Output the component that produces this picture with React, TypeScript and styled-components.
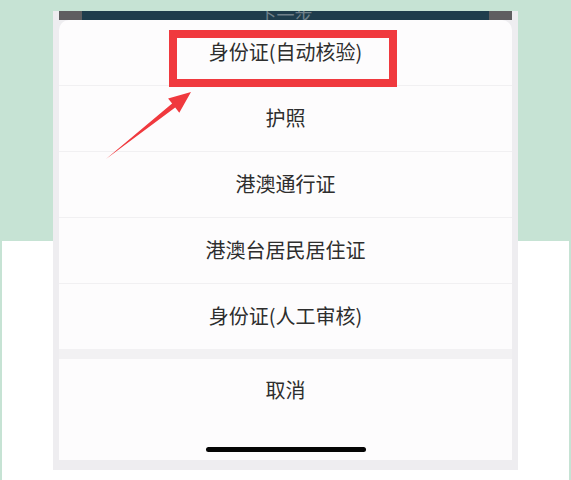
import * as React from "react";
import styled, { createGlobalStyle } from "styled-components";

const GlobalStyle = createGlobalStyle`
    html, body {
        margin: 0;
        padding: 0;
    }
    body {
        font-family: "Noto Sans CJK SC", "Noto Sans", sans-serif;
    }
`;

const MINT = "#c6e3d4";

const options = [
    "身份证(自动核验)",
    "护照",
    "港澳通行证",
    "港澳台居民居住证",
    "身份证(人工审核)",
];

const App: React.FC = () => {
    return (
        <Page>
            <GlobalStyle />
            <Phone>
                <Backdrop>
                    <NextButton>
                        <NextLabel>下一步</NextLabel>
                    </NextButton>
                </Backdrop>
                <Sheet>
                    <OptionList>
                        {options.map((label, i) => (
                            <Option key={label}>
                                {label}
                                {i === 0 && <Highlight />}
                            </Option>
                        ))}
                    </OptionList>
                    <Gap />
                    <Cancel>取消</Cancel>
                    <SafeArea>
                        <HomeBar />
                    </SafeArea>
                </Sheet>
            </Phone>
            <Arrow width="571" height="480" viewBox="0 0 571 480">
                <polygon
                    fill="#f0393e"
                    points="106,159 175.2,107.6 179.3,112.7 191,92 168.1,98.5 172.1,103.6"
                />
            </Arrow>
        </Page>
    );
};

const Page = styled.div`
    position: relative;
    height: 480px;
    overflow: hidden;
    box-sizing: border-box;
    border-left: 2px solid ${MINT};
    border-right: 2px solid ${MINT};
    background: linear-gradient(to bottom, ${MINT} 241px, #ffffff 241px);
    padding-top: 11px;
`;

const Phone = styled.div`
    margin-left: 51px;
    width: 465px;
    height: 459px;
    box-sizing: border-box;
    padding: 0 6px 10px 6px;
    background: #eeedf0;
    display: flex;
    flex-direction: column;
`;

const Backdrop = styled.div`
    height: 9px;
    background: #5f5e60;
    padding: 0 23px;
    position: relative;
    z-index: 0;
`;

const NextButton = styled.div`
    height: 19px;
    background: #1f3d4c;
    display: flex;
    justify-content: center;
    overflow: hidden;
`;

const NextLabel = styled.span`
    font-size: 18px;
    line-height: 18px;
    margin-top: -6px;
    color: #6f8089;
`;

const Sheet = styled.div`
    flex: 1;
    position: relative;
    z-index: 1;
    background: #fdfcfd;
    border-radius: 10px 10px 0 0;
    display: flex;
    flex-direction: column;
    overflow: hidden;
`;

const OptionList = styled.div`
    display: flex;
    flex-direction: column;
`;

const Option = styled.div`
    position: relative;
    height: 63px;
    padding-bottom: 2px;
    display: flex;
    align-items: center;
    justify-content: center;
    flex-shrink: 0;
    font-size: 20px;
    color: #2e2e2e;
    border-bottom: 1px solid #f1f0f2;

    &:last-child {
        border-bottom: none;
    }
`;

const Highlight = styled.div`
    position: absolute;
    left: 110px;
    top: 10px;
    width: 228px;
    height: 57px;
    box-sizing: border-box;
    border: 8.5px solid #f0393e;
    z-index: 2;
`;

const Gap = styled.div`
    height: 10px;
    flex-shrink: 0;
    background: #f2f1f3;
`;

const Cancel = styled.div`
    height: 60px;
    padding-bottom: 4px;
    flex-shrink: 0;
    display: flex;
    align-items: center;
    justify-content: center;
    font-size: 20px;
    color: #2e2e2e;
`;

const SafeArea = styled.div`
    flex: 1;
    display: flex;
    justify-content: center;
    padding-top: 24px;
`;

const HomeBar = styled.div`
    width: 160px;
    height: 5px;
    border-radius: 3px;
    background: #050505;
`;

const Arrow = styled.svg`
    position: absolute;
    left: -2px;
    top: 0;
    z-index: 5;
    pointer-events: none;
`;

export default App;
